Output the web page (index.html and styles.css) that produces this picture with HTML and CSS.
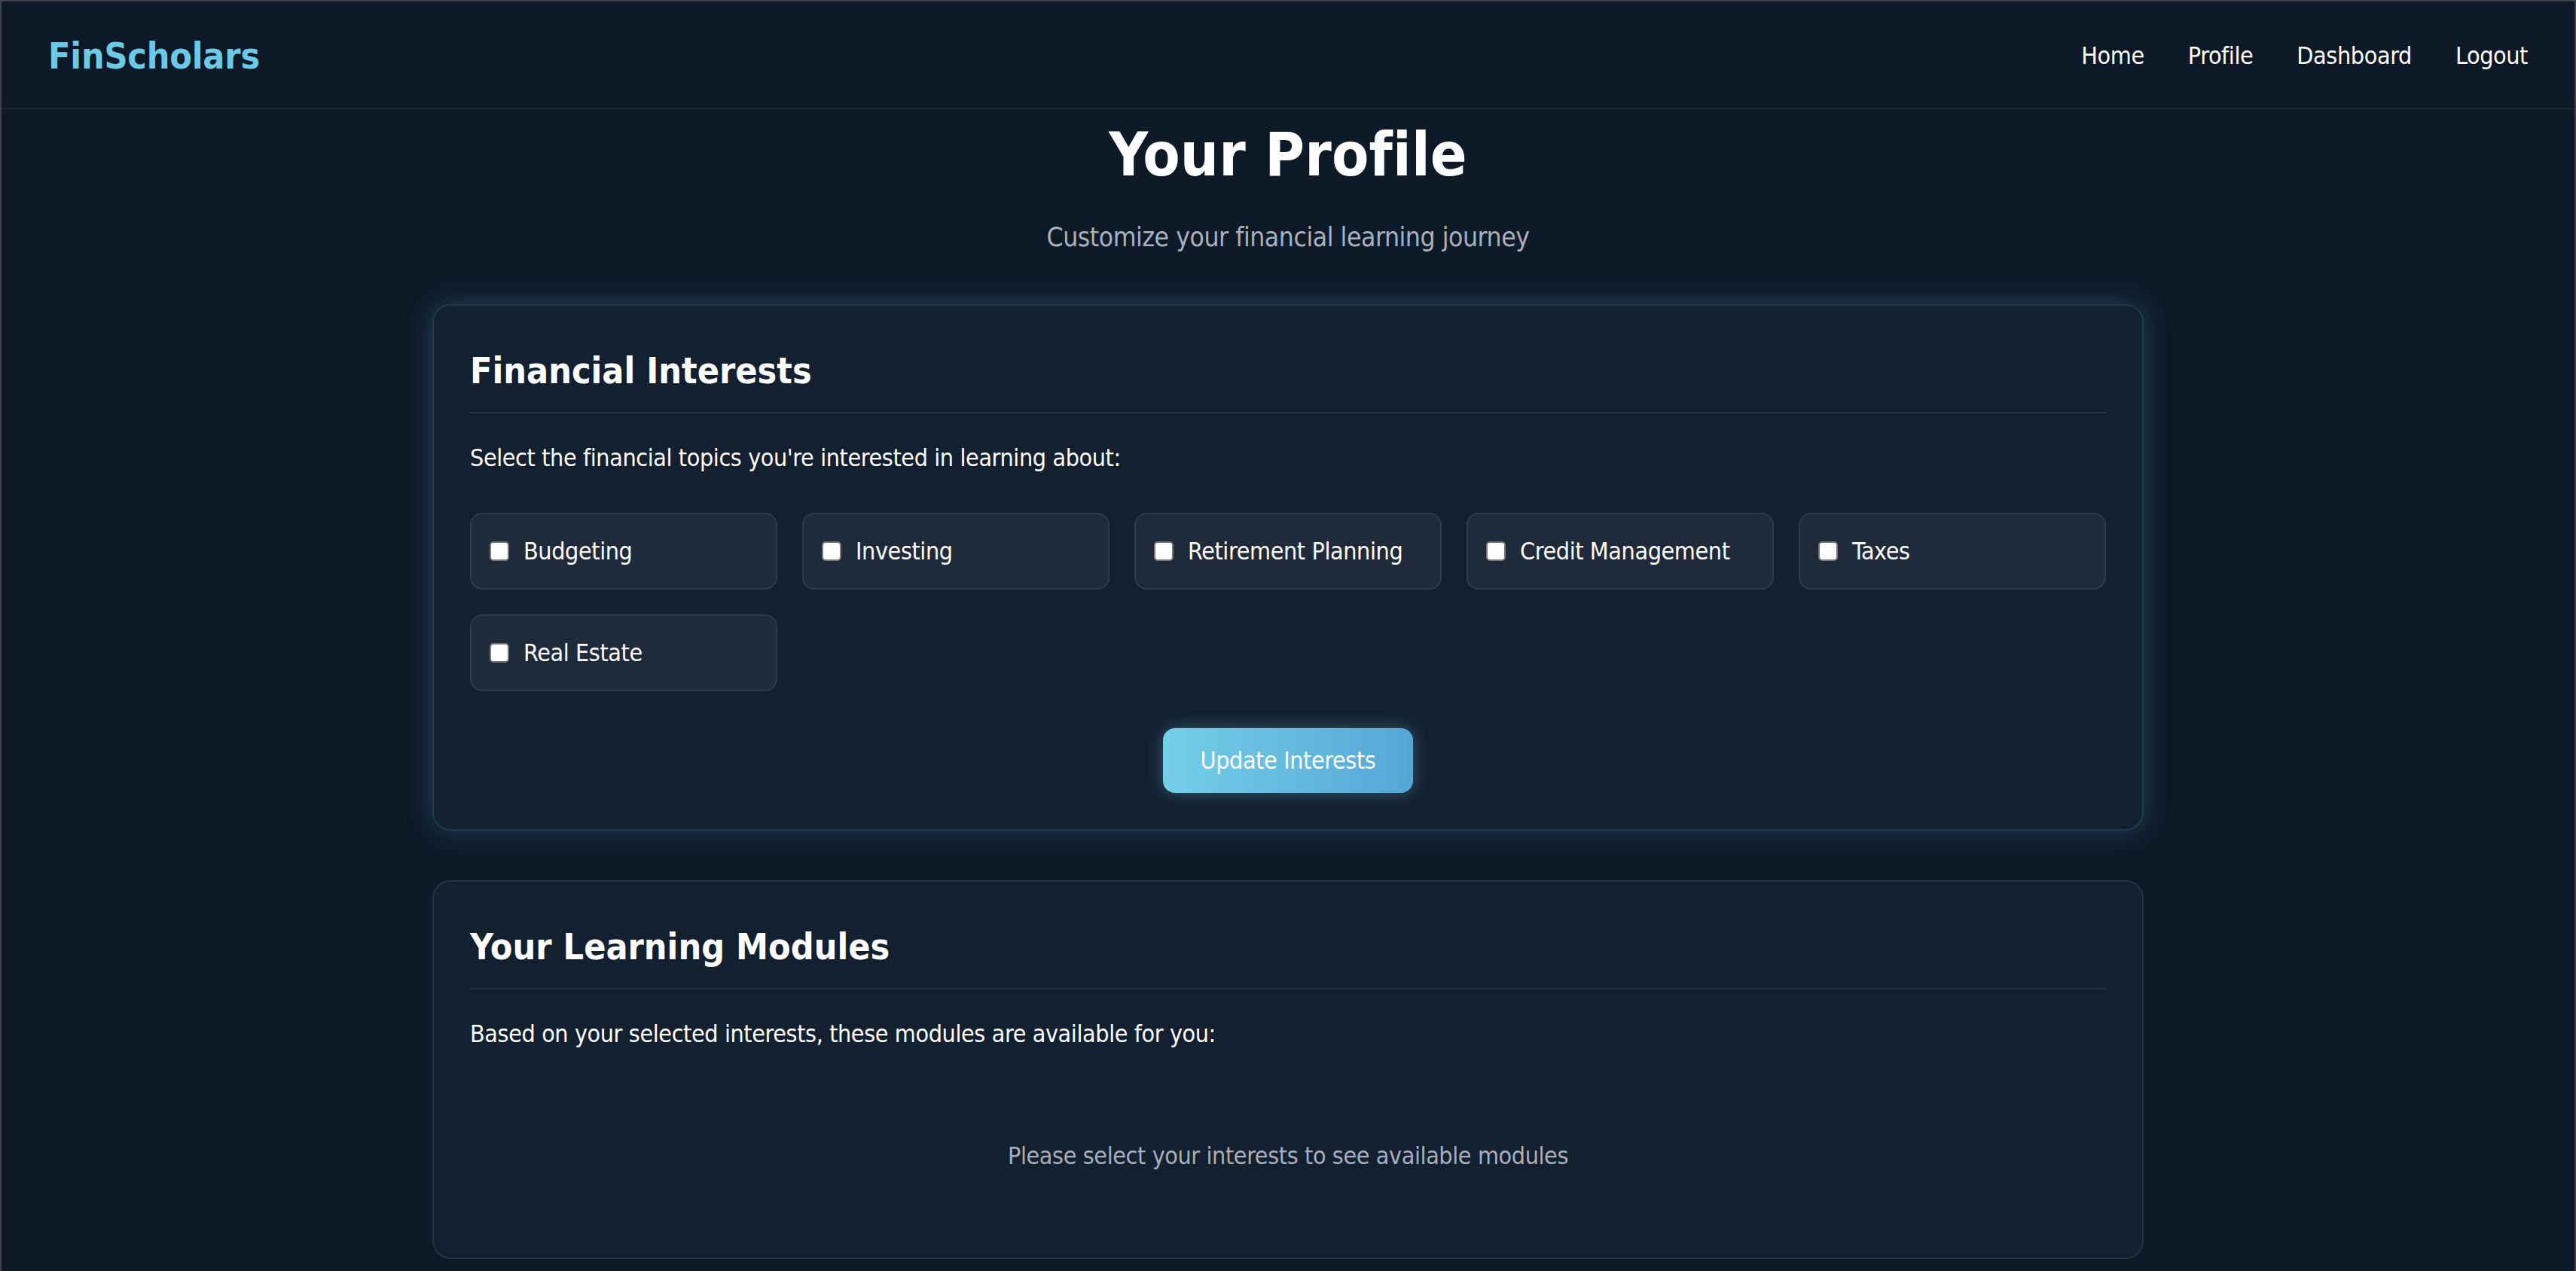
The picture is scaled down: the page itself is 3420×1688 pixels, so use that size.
FILE: index.html
```html
<!DOCTYPE html>
<html lang="en">
<head>
<meta charset="utf-8">
<title>FinScholars - Your Profile</title>
<link rel="stylesheet" href="styles.css">
</head>
<body>
<div class="frame">
  <header class="topbar">
    <a class="logo" href="#">FinScholars</a>
    <nav class="nav">
      <a href="#">Home</a>
      <a href="#">Profile</a>
      <a href="#">Dashboard</a>
      <a href="#">Logout</a>
    </nav>
  </header>

  <main class="container">
    <section class="intro">
      <h1 class="intro-title">Your Profile</h1>
      <p class="intro-sub">Customize your financial learning journey</p>
    </section>

    <section class="card card-glow">
      <h2 class="card-title">Financial Interests</h2>
      <p class="card-text">Select the financial topics you're interested in learning about:</p>
      <div class="topics">
        <label class="topic"><input type="checkbox" class="check"><span>Budgeting</span></label>
        <label class="topic"><input type="checkbox" class="check"><span>Investing</span></label>
        <label class="topic"><input type="checkbox" class="check"><span>Retirement Planning</span></label>
        <label class="topic"><input type="checkbox" class="check"><span>Credit Management</span></label>
        <label class="topic"><input type="checkbox" class="check"><span>Taxes</span></label>
        <label class="topic"><input type="checkbox" class="check"><span>Real Estate</span></label>
      </div>
      <div class="actions">
        <button class="btn" type="button">Update Interests</button>
      </div>
    </section>

    <section class="card card-modules">
      <h2 class="card-title">Your Learning Modules</h2>
      <p class="card-text">Based on your selected interests, these modules are available for you:</p>
      <div class="empty">Please select your interests to see available modules</div>
    </section>
  </main>
</div>
</body>
</html>
```

FILE: styles.css
```css
* {
  box-sizing: border-box;
}

html, body {
  margin: 0;
  padding: 0;
  background: #0e1a28;
}

body {
  font-family: "DejaVu Sans Condensed", "DejaVu Sans", sans-serif;
  color: #ffffff;
  font-size: 32px;
  line-height: 1.2;
  letter-spacing: -0.4px;
}

.frame {
  min-height: 100vh;
  border-top: 2px solid #3e434b;
  border-left: 2px solid #3e434b;
  border-right: 2px solid #3e434b;
  background: #0e1a28;
}

/* Header */
.topbar {
  height: 143px;
  display: flex;
  align-items: center;
  justify-content: space-between;
  padding: 4px 62px 0;
  background: #0e1928;
  border-bottom: 2px solid #1c2734;
}

.logo {
  font-size: 48px;
  font-weight: bold;
  color: #6cc9e6;
  text-decoration: none;
  letter-spacing: -0.2px;
}

.nav {
  display: flex;
  gap: 58px;
}

.nav a {
  color: #ffffff;
  text-decoration: none;
  font-size: 32px;
}

/* Main */
.container {
  max-width: 2400px;
  margin: 0 auto;
  padding: 0 64px 40px;
}

.intro {
  text-align: center;
  padding-top: 13px;
}

.intro-title {
  margin: 0 0 40px;
  font-size: 80px;
  font-weight: bold;
  line-height: 1.2;
  letter-spacing: 0.2px;
}

.intro-sub {
  margin: 0 0 68px;
  font-size: 35.2px;
  color: #a8b0bb;
  letter-spacing: -0.45px;
}

/* Cards */
.card {
  background: #13202f;
  border: 2px solid #1e3a4e;
  border-radius: 24px;
  padding: 48px;
}

.card-glow {
  box-shadow: 0 0 34px rgba(80, 170, 215, 0.28);
}

.card-modules {
  margin-top: 66px;
  border-color: #1f3446;
}

.card-title {
  margin: 10px 0 0;
  padding-bottom: 25px;
  font-size: 48px;
  font-weight: bold;
  line-height: 1.2;
  letter-spacing: 0;
  border-bottom: 2px solid #243344;
}

.card-text {
  margin: 40px 0 0;
  font-size: 32px;
}

/* Topics */
.topics {
  margin-top: 54px;
  display: grid;
  grid-template-columns: repeat(5, 1fr);
  gap: 33px;
}

.topic {
  height: 102px;
  display: flex;
  align-items: center;
  gap: 19px;
  padding: 0 24px;
  background: #1f2b3b;
  border: 2px solid #2d3b4d;
  border-radius: 16px;
  font-size: 32px;
  cursor: pointer;
}

.check {
  appearance: none;
  -webkit-appearance: none;
  margin: 0;
  width: 26px;
  height: 26px;
  flex: none;
  background: #ffffff;
  border: 2px solid #767676;
  border-radius: 5px;
}

.actions {
  display: flex;
  justify-content: center;
  margin-top: 49px;
}

.btn {
  font-family: inherit;
  font-size: 32px;
  line-height: 38px;
  letter-spacing: -0.4px;
  color: #ffffff;
  padding: 24px 50px;
  border: none;
  border-radius: 16px;
  background: linear-gradient(90deg, #74cfe8 0%, #55a6d6 100%);
  box-shadow: 0 0 22px rgba(110, 203, 232, 0.35);
  cursor: pointer;
}

/* Empty state */
.empty {
  margin-top: 60px;
  padding: 64px 0 67px;
  text-align: center;
  color: #a8afba;
  font-size: 32px;
}
```
